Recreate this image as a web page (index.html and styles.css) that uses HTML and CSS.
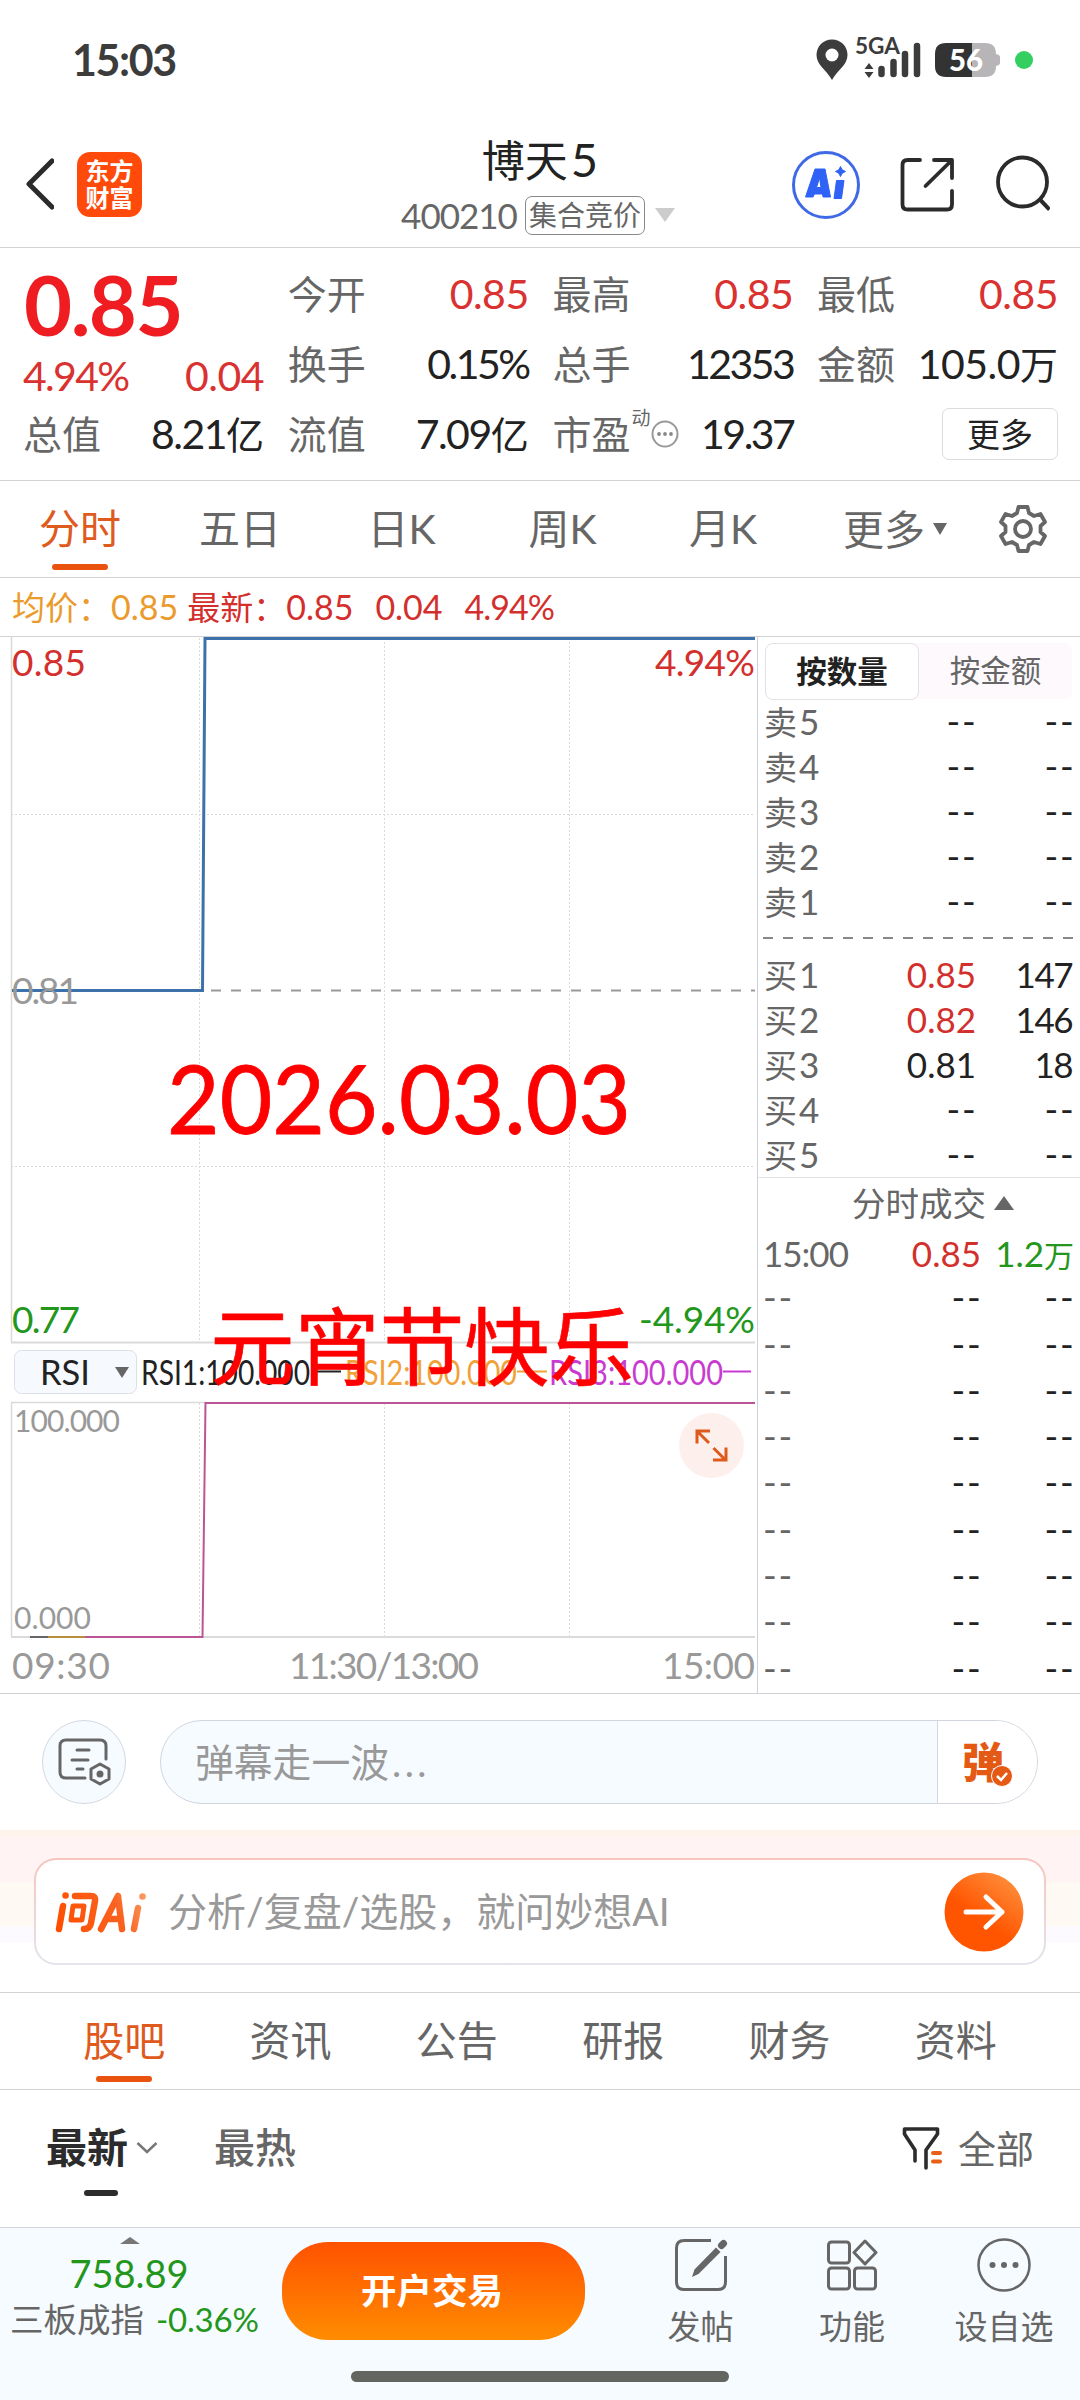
FILE: index.html
```html
<!DOCTYPE html>
<html lang="zh-CN">
<head>
<meta charset="utf-8">
<title>博天5</title>
<link rel="stylesheet" href="styles.css">
</head>
<body>
<div class="app">
  <div class="status">
    <span class="clock">15:03</span>
    <svg class="status-icons" width="228" height="60" viewBox="812 28 228 60">
      <path d="M832 38.500c-9 0-15.500 7-15.500 15.500 0 10 10 15 15.500 25 5.500-10 15.500-15 15.500-25 0-8.500-6.500-15.500-15.500-15.500z" fill="#3c3c3c"/>
      <circle cx="832" cy="54" r="6.500" fill="#fff"/>
      <text x="855" y="53" class="t-net" textLength="45" lengthAdjust="spacingAndGlyphs">5GA</text>
      <path d="M869 62l4.500 6h-9zM869 77l4.500-6h-9z" fill="#3c3c3c"/>
      <path d="M881.500 68v5M893.500 61v12M905 53v20M917 45v28" stroke="#3c3c3c" stroke-width="6.500" stroke-linecap="round"/>
      <path d="M946 42h26v34h-26q-11 0-11-11v-12q0-11 11-11z" fill="#333"/>
      <path d="M972 42h13q11 0 11 11v12q0 11-11 11h-13zM996 53q4 1 4 3v6q0 2-4 3z" fill="#b7b5b7"/>
      <text x="949" y="70" class="t-bat" textLength="34" lengthAdjust="spacingAndGlyphs">56</text>
      <circle cx="1024" cy="59" r="9" fill="#34ce61"/>
    </svg>
  </div>

  <header class="head">
    <div class="head-left">
      <svg width="30" height="52" viewBox="0 0 30 52"><path d="M28 3L5 26l23 23" fill="none" stroke="#2b2b2b" stroke-width="5" stroke-linecap="round" stroke-linejoin="round"/></svg>
      <div class="logo"><span>东方</span><span>财富</span></div>
    </div>
    <div class="head-mid">
      <div class="title">博天<b>5</b></div>
      <div class="sub"><span class="code">400210</span><span class="badge">集合竞价</span><i class="tri-down"></i></div>
    </div>
    <div class="head-right">
      <svg width="260" height="70" viewBox="790 149 260 70" fill="none">
        <circle cx="826" cy="184" r="32.500" stroke="#4069e5" stroke-width="3"/>
        <path d="M815 168h10l5.500 28h-7.500l-.500-3h-8l-1.500 3h-7.500zM819.500 177l-3 9.500h4.500z" fill="#2f62f5" fill-rule="evenodd" stroke="#2f62f5" stroke-linejoin="round"/>
        <path d="M836.500 179.500h7.500l-2.500 18h-7.500z" fill="#2f62f5" stroke="#2f62f5" stroke-linejoin="round"/>
        <path d="M840.500 165.500q1 4 5 5-4 1-5 5-1-4-5-5 4-1 5-5z" fill="#2f62f5" stroke="#2f62f5"/>
        <path d="M920 159h-12.500q-5 0-5 5v39.500q0 5 5 5h39.500q5 0 5-5v-13.500M934 159h18v18M951 160l-25.500 25" stroke="#2b2b2b" stroke-width="3.800" stroke-linecap="round" stroke-linejoin="round"/>
        <circle cx="1022.500" cy="181" r="24.500" stroke="#2b2b2b" stroke-width="3.800"/>
        <path d="M1039.500 198l10 10.500" stroke="#2b2b2b" stroke-width="4" stroke-linecap="butt"/>
      </svg>
    </div>
  </header>

  <section class="quote">
    <div class="q-main">
      <div class="price">0.85</div>
      <div class="cell chg"><span class="pc">4.94%</span><span>0.04</span></div>
      <div class="cell"><label>总值</label><span class="snug">8.21<em>亿</em></span></div>
    </div>
    <div class="q-col">
      <div class="cell red"><label>今开</label><span>0.85</span></div>
      <div class="cell"><label>换手</label><span class="tight">0.15%</span></div>
      <div class="cell"><label>流值</label><span class="snug">7.09<em>亿</em></span></div>
    </div>
    <div class="q-col">
      <div class="cell red"><label>最高</label><span>0.85</span></div>
      <div class="cell"><label>总手</label><span class="tight">12353</span></div>
      <div class="cell"><label>市盈<sup>动</sup><svg width="30" height="30" viewBox="0 0 30 30"><circle cx="15" cy="15" r="12.500" fill="none" stroke="#999" stroke-width="2"/><circle cx="9" cy="15" r="1.900" fill="#888"/><circle cx="15" cy="15" r="1.900" fill="#888"/><circle cx="21" cy="15" r="1.900" fill="#888"/></svg></label><span class="tight">19.37</span></div>
    </div>
    <div class="q-col">
      <div class="cell red"><label>最低</label><span>0.85</span></div>
      <div class="cell"><label>金额</label><span>105.0<em>万</em></span></div>
      <div class="cell end"><button class="more">更多</button></div>
    </div>
  </section>

  <nav class="periods">
    <a class="on">分时</a><a>五日</a><a>日K</a><a>周K</a><a>月K</a><a class="pm">更多<i></i></a>
    <svg width="50" height="50" viewBox="0 0 50 50" fill="none" stroke="#666" stroke-width="3.800" stroke-linejoin="round"><path d="M20.500 3h9l1.500 6 5 3 6.500-2 4.500 8-4.500 4v6l4.500 4-4.500 8-6.500-2-5 3-1.500 6h-9l-1.500-6-5-3-6.500 2-4.500-8 4.500-4v-6l-4.500-4 4.500-8 6.500 2 5-3z"/><circle cx="25" cy="25" r="8"/></svg>
  </nav>

  <div class="legend"><span class="avg">均价：</span><span class="avg n">0.85</span><span>最新：</span><span class="n">0.85</span><span class="n">0.04</span><span class="n pc">4.94%</span></div>

  <main class="market">
    <svg class="chart" width="757" height="1056" viewBox="0 637 757 1056">
      <g fill="none" stroke="#dadada">
        <path d="M11.500 637v706M11.500 1403v234" stroke-width="1.500"/>
        <path d="M11 1342.500h744M11 1637h744" stroke-width="2"/>
        <path d="M11 1402.500h195" stroke-width="1.500"/>
        <g stroke-dasharray="2 2">
          <path d="M199.500 638v704M384.500 638v704M569.500 638v704M199.500 1403v234M384.500 1403v234M569.500 1403v234M11 814.500h744M11 1166.500h744"/>
        </g>
      </g>
      <path d="M211 990.500h544" stroke="#999" stroke-width="2" stroke-dasharray="10 10"/>
      <path d="M12 990.500H202.500L205 638.500H755" fill="none" stroke="#3c71ab" stroke-width="3"/>
      <g class="axis">
        <text class="up" x="12" y="676" textLength="74">0.85</text>
        <text class="up" x="655" y="676" textLength="100">4.94%</text>
        <text x="12" y="1004" textLength="67">0.81</text>
        <text class="down" x="12" y="1333" textLength="68">0.77</text>
        <text class="down" x="639" y="1333" textLength="116">-4.94%</text>
        <text x="12" y="1679" textLength="98">09:30</text>
        <text x="289" y="1679" textLength="190">11:30/13:00</text>
        <text x="662" y="1679" textLength="93">15:00</text>
      </g>
      <rect x="14.500" y="1350.500" width="122" height="43" rx="7" fill="#f6faff" stroke="#dcdfe8"/>
      <g class="rsi">
        <text x="40" y="1385" fill="#222" textLength="50" lengthAdjust="spacingAndGlyphs">RSI</text>
        <path d="M115 1367h14l-7 11z" fill="#666"/>
        <text x="141" y="1385" fill="#222" textLength="169" lengthAdjust="spacingAndGlyphs">RSI1:100.000</text>
        <text x="345" y="1385" fill="#f0a13a" textLength="172" lengthAdjust="spacingAndGlyphs">RSI2:100.000</text>
        <text x="549" y="1385" fill="#c93bd0" textLength="174" lengthAdjust="spacingAndGlyphs">RSI3:100.000</text>
        <path d="M311 1371.500h30" stroke="#222" stroke-width="2"/>
        <path d="M517 1371.500h30" stroke="#f0a13a" stroke-width="2"/>
        <path d="M723 1371.500h28" stroke="#c93bd0" stroke-width="2"/>
      </g>
      <g class="scale">
        <text x="14" y="1432" textLength="106">100.000</text>
        <text x="14" y="1629" textLength="77">0.000</text>
      </g>
      <path d="M30 1637h18" stroke="#666" stroke-width="2"/>
      <path d="M48 1637h37" stroke="#b88d3c" stroke-width="2"/>
      <path d="M85 1637H202.500L205.500 1403H755" fill="none" stroke="#bc5596" stroke-width="2"/>
      <circle cx="711.500" cy="1445.500" r="32.500" fill="#fdf0ec"/>
      <path d="M697 1443.500v-12.500h13M697 1431l12 12M713.500 1448l12 12M726 1447.500v12.500h-13" fill="none" stroke="#df5a1d" stroke-width="3"/>
      <text class="mark" x="167" y="1134" font-size="95" textLength="464" lengthAdjust="spacingAndGlyphs">2026.03.03</text>
      <text class="mark wish" x="210" y="1379" font-size="85" textLength="424">元宵节快乐</text>
    </svg>

    <aside class="book">
      <div class="switch"><span class="on">按数量</span><span>按金额</span></div>
      <div class="lv"><label>卖<b>5</b></label><span class="nil">--</span><span class="nil">--</span></div>
      <div class="lv"><label>卖<b>4</b></label><span class="nil">--</span><span class="nil">--</span></div>
      <div class="lv"><label>卖<b>3</b></label><span class="nil">--</span><span class="nil">--</span></div>
      <div class="lv"><label>卖<b>2</b></label><span class="nil">--</span><span class="nil">--</span></div>
      <div class="lv"><label>卖<b>1</b></label><span class="nil">--</span><span class="nil">--</span></div>
      <div class="split"></div>
      <div class="lv"><label>买<b>1</b></label><span class="up">0.85</span><span class="tight">147</span></div>
      <div class="lv"><label>买<b>2</b></label><span class="up">0.82</span><span class="tight">146</span></div>
      <div class="lv"><label>买<b>3</b></label><span>0.81</span><span class="tight">18</span></div>
      <div class="lv"><label>买<b>4</b></label><span class="nil">--</span><span class="nil">--</span></div>
      <div class="lv"><label>买<b>5</b></label><span class="nil">--</span><span class="nil">--</span></div>
      <div class="tape-head">分时成交<svg width="20" height="14" viewBox="0 0 20 14"><path d="M10 0l10 14H0z" fill="#666"/></svg></div>
      <div class="tk"><label>15:00</label><span class="up">0.85</span><span class="down">1.2<em>万</em></span></div>
      <div class="tk"><label class="nil">--</label><span class="nil">--</span><span class="nil">--</span></div>
      <div class="tk"><label class="nil">--</label><span class="nil">--</span><span class="nil">--</span></div>
      <div class="tk"><label class="nil">--</label><span class="nil">--</span><span class="nil">--</span></div>
      <div class="tk"><label class="nil">--</label><span class="nil">--</span><span class="nil">--</span></div>
      <div class="tk"><label class="nil">--</label><span class="nil">--</span><span class="nil">--</span></div>
      <div class="tk"><label class="nil">--</label><span class="nil">--</span><span class="nil">--</span></div>
      <div class="tk"><label class="nil">--</label><span class="nil">--</span><span class="nil">--</span></div>
      <div class="tk"><label class="nil">--</label><span class="nil">--</span><span class="nil">--</span></div>
      <div class="tk"><label class="nil">--</label><span class="nil">--</span><span class="nil">--</span></div>
    </aside>
  </main>

  <section class="danmu">
    <div class="round"><svg width="54" height="50" viewBox="58 1738 54 50" fill="none" stroke="#666" stroke-width="3" stroke-linecap="round" stroke-linejoin="round"><path d="M86 1779H67q-6 0-6-6v-26q0-6 6-6h34q6 0 6 6v13M78 1751h12M73 1761h16M78 1770h6"/><path d="M101 1765l9 5v10l-9 5-9-5v-10z"/><circle cx="101" cy="1775" r="2" fill="#666"/></svg></div>
    <div class="pill"><span class="ph">弹幕走一波<b>...</b></span><span class="send">弹<svg width="22" height="22" viewBox="0 0 22 22"><circle cx="11" cy="11" r="10.500" fill="#e45a14" stroke="#fff"/><path d="M6 11l4 4 6-7" stroke="#fff" stroke-width="2.500" fill="none"/></svg></span></div>
  </section>

  <section class="ai">
    <div class="ai-card">
      <svg width="92" height="42" viewBox="55 1890 92 42" fill="none" stroke="url(#g)" stroke-width="6.500" stroke-linecap="round" stroke-linejoin="round">
        <defs><linearGradient id="g" gradientUnits="userSpaceOnUse" x1="60" y1="1930" x2="146" y2="1892"><stop offset="0" stop-color="#ff4e00"/><stop offset=".65" stop-color="#fa6220"/><stop offset="1" stop-color="#fb9c66"/></linearGradient></defs>
        <path d="M63 1905l-4 23M65.500 1894.500h.1M75 1895h16q5 0 4 5l-4 22q-1 6-7 6"/>
        <path d="M73 1905h11l-2 14H71z" stroke-width="5"/>
        <path d="M101 1928l17-33 4 33M109 1918h12M138 1907l-4 21M142.500 1895.500h.1"/>
      </svg>
      <span class="ai-text">分析/复盘/选股，就问妙想AI</span>
      <svg class="go" width="80" height="80" viewBox="0 0 80 80"><defs><linearGradient id="h" x1="1" y1="0" x2="0.300" y2="1"><stop offset="0" stop-color="#ff9a48"/><stop offset=".65" stop-color="#ff5500"/></linearGradient></defs><circle cx="40" cy="40" r="39.500" fill="url(#h)"/><path d="M22 40h36M42 25l16 15-16 15" fill="none" stroke="#fff" stroke-width="5" stroke-linecap="round" stroke-linejoin="round"/></svg>
    </div>
  </section>

  <nav class="info"><a class="on">股吧</a><a>资讯</a><a>公告</a><a>研报</a><a>财务</a><a>资料</a></nav>

  <div class="sort">
    <span class="new">最新</span>
    <svg class="chev" width="22" height="14" viewBox="0 0 22 14"><path d="M1.500 2l9.500 9 9.500-9" fill="none" stroke="#777" stroke-width="2.500"/></svg>
    <span class="hot">最热</span>
    <svg class="filter" width="40" height="44" viewBox="0 0 40 44" fill="none" stroke="#2c2c2c" stroke-width="3.600" stroke-linejoin="round" stroke-linecap="round"><path d="M13 35V24L2.500 8V3h33v5L24 24v18"/><path d="M31 27h7M31 35.500h7" stroke="#e86018" stroke-width="4"/></svg>
    <span class="all">全部</span>
  </div>

  <footer class="bar">
    <div class="index">
      <i></i><div class="pt">758.89</div>
      <div class="nm">三板成指<span>-0.36%</span></div>
    </div>
    <button class="open">开户交易</button>
    <div class="act"><svg width="56" height="56" viewBox="0 0 56 56" fill="none" stroke="#666" stroke-width="3"><path d="M38 3.500H11q-7.500 0-7.500 7.500v34q0 7.500 7.500 7.500h34q7.500 0 7.500-7.500V19"/><path d="M48.500 8.500l2-2" stroke-width="7" stroke-linecap="round"/><path d="M43 10.500l4.500 4.500-22 22-6.500 3 2.500-7.500z" fill="#666" stroke="none"/></svg>发帖</div>
    <div class="act"><svg width="52" height="56" viewBox="0 0 52 56" fill="none" stroke="#666" stroke-width="3" stroke-linejoin="round"><rect x="2.500" y="5" width="21" height="21" rx="3"/><rect x="2.500" y="31" width="21" height="21" rx="3"/><rect x="28.500" y="31" width="21" height="21" rx="3"/><path d="M39 4l11 11.500-11 11.500-11-11.500z"/></svg>功能</div>
    <div class="act"><svg width="56" height="56" viewBox="0 0 56 56"><circle cx="28" cy="28" r="25.500" fill="none" stroke="#666" stroke-width="2.500"/><g fill="#666"><circle cx="16.500" cy="28" r="3"/><circle cx="28" cy="28" r="3"/><circle cx="39.500" cy="28" r="3"/></g></svg>设自选</div>
    <div class="home"></div>
  </footer>
</div>
</body>
</html>
```
FILE: styles.css
```css
* { box-sizing: border-box; }
body { margin: 0; background: #fff; color: #222; font-family: Lato, "Noto Sans CJK SC", sans-serif; }
svg { display: block; flex: none; }
i, em, b, label { font-style: normal; font-weight: inherit; }
button { font: inherit; color: inherit; border: 0; padding: 0; background: none; }
.app { width: 1080px; height: 2400px; display: flex; flex-direction: column; overflow: hidden; }
.up { color: #d32f2c; fill: #d32f2c; }
.down { color: #23961c; fill: #23961c; }

.status { height: 119px; padding: 0 40px 0 72px; display: flex; justify-content: space-between; align-items: center; }
.status-icons { margin-top: -2px; }
.clock { font-size: 43px; font-weight: 700; color: #3c3c3c; line-height: 119px; letter-spacing: -1.400px; }
.t-net { font-size: 22px; font-weight: 700; fill: #3c3c3c; }
.t-bat { font-size: 30px; font-weight: 900; fill: #fff; }

.head { height: 129px; border-bottom: 1px solid #d2d2d2; display: grid; grid-template-columns: 340px 400px 340px; }
.head-left { display: flex; align-items: center; gap: 23px; padding: 2px 0 0 24px; }
.logo { width: 65px; height: 65px; border-radius: 13px; background: #ff4a0c; color: #fff; display: flex; flex-direction: column; align-items: center; justify-content: center; font-size: 24px; font-weight: 700; line-height: 27px; }
.head-mid { display: flex; flex-direction: column; align-items: center; }
.title { margin-top: 10px; font-size: 43px; line-height: 60px; height: 60px; white-space: nowrap; }
.title b { font-size: 47px; line-height: 60px; margin-left: 3px; }
.sub { display: flex; align-items: center; margin: 4px 4px 0 0; height: 44px; }
.code { font-size: 35px; color: #666; letter-spacing: -1px; line-height: 40px; margin-right: 8px; }
.badge { height: 39px; width: 120px; border: 1px solid #888; border-radius: 7px; font-size: 28px; line-height: 37px; color: #666; text-align: center; white-space: nowrap; }
.tri-down { margin-left: 10px; border: 10px solid transparent; border-top: 14px solid #ccc; border-bottom: 0; }
.head-right { display: flex; justify-content: flex-end; align-items: center; padding: 3px 30px 0 0; }

.quote { height: 233px; border-bottom: 1px solid #d2d2d2; display: grid; grid-template-columns: repeat(4, 241px); column-gap: 23.700px; padding: 11px 20px 0 23px; }
.q-main { display: grid; grid-template-rows: 93px 47px 70px; }
.q-col { display: grid; grid-template-rows: 70px 70px 70px; }
.price { font-size: 83px; font-weight: 700; color: #ef1c21; line-height: 90px; letter-spacing: -1.500px; padding-left: 1px; }
.cell { display: flex; justify-content: space-between; align-items: center; font-size: 41px; line-height: 70px; letter-spacing: -.5px; white-space: nowrap; }
.cell label { font-size: 39px; letter-spacing: 0; color: #666; display: flex; align-items: center; height: 70px; line-height: 70px; }
.cell em { font-size: 38px; letter-spacing: 0; }
.cell .tight { letter-spacing: -2.500px; }
.cell .snug { letter-spacing: -1.500px; }
.cell .pc { letter-spacing: -1.700px; }
.cell sup { font-size: 19px; line-height: 20px; align-self: flex-start; margin: 9px 0 0 1px; }
.chg { line-height: 45px; }
.chg, .red span { color: #d93230; }
.cell.end { justify-content: flex-end; }
.more { width: 116px; height: 52px; border: 1px solid #dcdcdc; border-radius: 7px; font-size: 33px; line-height: 48px; letter-spacing: 0; }

.periods { height: 97px; border-bottom: 1px solid #d2d2d2; display: grid; grid-template-columns: 160px 160px 163px 159px 162px 192px 1fr; align-items: center; }
.periods a { font-size: 41px; color: #666; text-align: center; height: 96px; line-height: 95px; display: flex; flex-direction: column; align-items: center; }
.periods a.on, .info a.on { color: #df5a1d; }
.periods a.on::after, .info a.on::after { content: ""; flex: none; width: 56px; height: 6px; border-radius: 3px; background: #e9530f; margin-top: -12px; }
.periods a.pm { flex-direction: row; gap: 8px; padding-left: 39px; }
.pm i { border: 7px solid transparent; border-top: 12px solid #666; border-bottom: 0; }
.periods svg { margin-left: 2px; }

.legend { height: 59px; border-bottom: 1px solid #d2d2d2; padding-left: 12px; display: flex; align-items: center; font-size: 33px; line-height: 60px; color: #d32f2c; white-space: nowrap; }
.legend .n { font-size: 34px; margin-right: 22px; letter-spacing: 0; }
.legend .avg { color: #eb9a2c; }
.legend .avg.n { margin-right: 9px; }
.legend .pc { letter-spacing: -1px; }

.market { height: 1057px; border-bottom: 1px solid #d0d0d6; display: flex; }
.axis text { font-size: 37px; }
.axis text:not(.up):not(.down) { fill: #999; }
.rsi text { font-size: 34px; }
.scale text { font-size: 30px; fill: #999; }
.mark { fill: #fe0000; font-weight: 400; stroke: #fe0000; stroke-width: .8px; }
.wish { stroke-width: .6px; }
.book { width: 323px; border-left: 1px solid #d0d0dc; display: flex; flex-direction: column; }
.switch { margin: 6px 8px 0 7px; height: 56px; flex: none; border-radius: 8px; background: #fdf9fd; display: grid; grid-template-columns: 154px 1fr; font-size: 30.500px; line-height: 55px; text-align: center; color: #666; }
.switch .on { border: 1px solid #e2e2e6; border-radius: 8px; background: #fff; color: #222; font-weight: 700; }
.lv { height: 45px; flex: none; padding: 0 6px 0 6px; display: grid; grid-template-columns: 70px 1fr 98px; font-size: 35px; line-height: 45px; }
.lv label { color: #666; font-size: 33px; white-space: nowrap; }
.lv b { font-size: 35px; margin-left: 2px; }
.lv span, .tk span { text-align: right; }
.lv .tight { letter-spacing: -1.500px; padding-right: 2px; }
.lv .nil, .tk .nil { font-size: 37px; letter-spacing: 1.800px; }
.lv .nil { line-height: 43px; margin-right: -1.500px; }
.tk .nil { line-height: 42px; }
.tk span.nil { margin-right: -1.500px; }
.split { height: 28px; flex: none; margin: 0 7px 0 5px; background: repeating-linear-gradient(90deg, #888 0 10px, transparent 10px 20px) 0 13px / 100% 2px no-repeat; }
.tape-head { height: 53px; flex: none; border-top: 1px solid #e2e2e6; display: flex; justify-content: center; align-items: center; gap: 8px; padding-left: 28px; font-size: 33.500px; line-height: 50px; padding-bottom: 3px; color: #666; }
.tk { height: 46.300px; flex: none; padding: 0 6px 0 5px; display: grid; grid-template-columns: 90px 1fr 93px; font-size: 35px; line-height: 46px; white-space: nowrap; }
.tk label { color: #666; letter-spacing: -1px; }
.tk em { font-size: 30px; }

.danmu { height: 136px; display: flex; gap: 34px; padding: 26px 42px 0; }
.round { width: 84px; height: 84px; border: 1px solid #d4d8e2; border-radius: 50%; background: #f6fbff; display: flex; align-items: center; justify-content: center; }
.pill { width: 878px; height: 84px; border: 1px solid #d0d5de; border-radius: 42px; background: #f6fbff; display: flex; overflow: hidden; }
.ph { flex: 1; padding-left: 34px; font-size: 38.800px; line-height: 82px; color: #999; }
.ph b { letter-spacing: 3.500px; margin-left: 3px; }
.send { width: 100px; border-left: 1px solid #d0d5de; background: #fff; display: flex; align-items: center; padding-left: 24px; font-size: 42px; font-weight: 900; color: #e45a14; line-height: 80px; }
.send svg { margin: 28px 0 0 -13px; }

.ai { height: 162px; padding: 28px 34px 0; background: linear-gradient(#fff4ec 0 6px, #fff3f4 6px 52px, #fff9f4 52px 96px, #fdfaff 96px 112px, #fff 112px); }
.ai-card { height: 107px; border: 2px solid transparent; border-radius: 22px; background: linear-gradient(#fff, #fff) padding-box, linear-gradient(#f6c4bd, #e4e4ee) border-box; display: flex; align-items: center; padding: 0 20px 0 19px; }
.ai-text { flex: 1; margin-left: 21px; font-size: 39px; line-height: 105px; color: #999; }

.info { height: 98px; border-top: 1px solid #d2d2d2; border-bottom: 1px solid #d2d2d2; padding: 0 41px; display: grid; grid-template-columns: repeat(6, 1fr); }
.info a { font-size: 41px; line-height: 95px; height: 96px; color: #666; display: flex; flex-direction: column; align-items: center; }

.sort { height: 137px; padding: 0 46px 22px; display: flex; align-items: center; font-size: 41px; line-height: 116px; white-space: nowrap; }
.new { font-weight: 700; color: #2c2c2c; height: 116px; display: flex; flex-direction: column; align-items: center; }
.new::after { content: ""; flex: none; width: 34px; height: 6px; border-radius: 3px; background: #2c2c2c; margin: -16px 0 0 28px; }
.chev { margin-left: 8px; }
.hot { margin-left: 56px; color: #666; font-weight: 500; }
.filter { margin-left: auto; }
.all { margin-left: 16px; font-size: 38px; color: #666; }

.bar { height: 173px; flex: none; background: #f6fbff; border-top: 1px solid #d2d6dc; position: relative; display: grid; grid-template-columns: 282px 343px 151px 152px 152px; }
.index { color: #23961c; display: flex; flex-direction: column; align-items: center; padding-top: 9px; }
.index i { border: 10px solid transparent; border-bottom: 7px solid #777; border-top: 0; margin-left: -23px; }
.pt { font-size: 38px; line-height: 50px; margin: 4px 0 0 -24px; }
.nm { align-self: flex-start; padding-left: 10px; font-size: 33.500px; line-height: 44px; color: #666; white-space: nowrap; margin-top: -1px; }
.nm span { font-size: 33px; color: #23961c; margin-left: 12px; letter-spacing: -.2px; }
.open { width: 303px; height: 98px; margin-top: 14px; border-radius: 46px; background: linear-gradient(#ff5200, #ff8c00); color: #fff; font-size: 35.500px; font-weight: 700; line-height: 98px; padding-right: 3px; }
.act { display: flex; flex-direction: column; align-items: center; padding-top: 9px; font-size: 33px; line-height: 50px; gap: 8px; color: #666; }
.home { position: absolute; left: 351px; top: 143px; width: 378px; height: 11px; border-radius: 6px; background: #636561; }
```
